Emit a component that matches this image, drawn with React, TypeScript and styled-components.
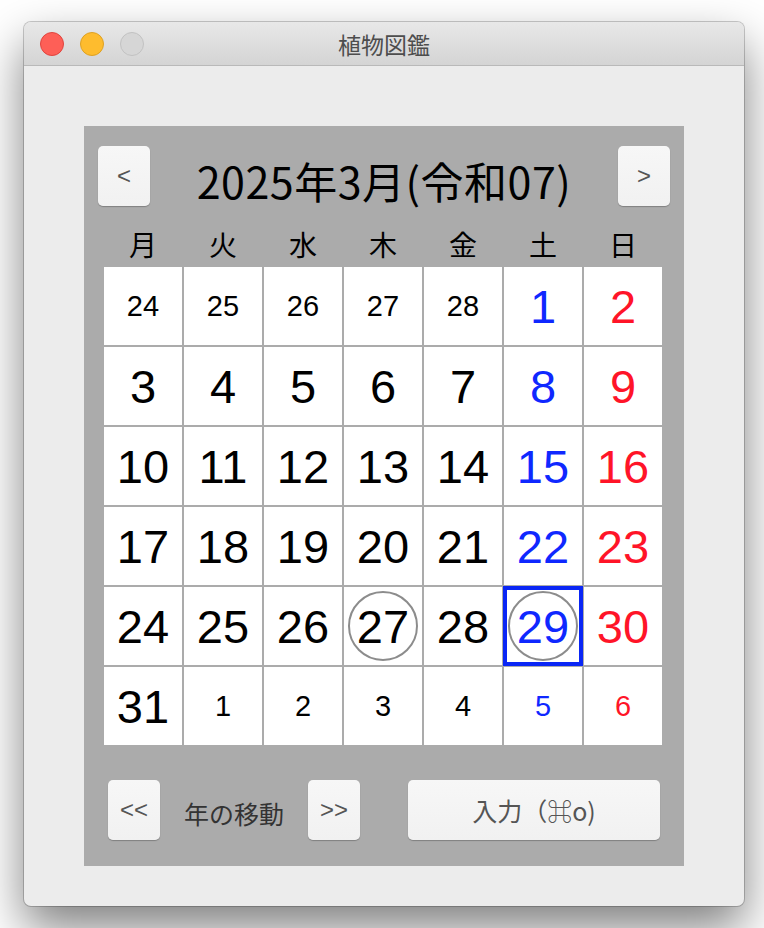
import styled, { createGlobalStyle } from "styled-components"

const GlobalStyle = createGlobalStyle`
  html, body {
    margin: 0;
    padding: 0;
    background: #ffffff;
  }
  body {
    font-family: "Liberation Sans", "Noto Sans CJK JP", sans-serif;
  }
`

const Page = styled.div`
  height: 928px;
  box-sizing: border-box;
  padding: 22px 20px 0 24px;
  overflow: hidden;
`

const Window = styled.div`
  width: 720px;
  height: 884px;
  background: #ececec;
  border-radius: 7px;
  box-shadow: 0 0 0 1px rgba(0, 0, 0, 0.2), 0 22px 48px rgba(0, 0, 0, 0.5);
  overflow: hidden;
  display: flex;
  flex-direction: column;
`

const TitleBar = styled.div`
  height: 43px;
  flex-shrink: 0;
  display: grid;
  grid-template-columns: 1fr auto 1fr;
  align-items: center;
  background: linear-gradient(#e8e8e8, #d4d4d4);
  border-bottom: 1px solid #b9b9b9;
`

const Lights = styled.div`
  display: flex;
  gap: 16px;
  padding-left: 16px;
`

const Light = styled.span<{ $fill: string; $edge: string }>`
  width: 24px;
  height: 24px;
  border-radius: 50%;
  background: ${p => p.$fill};
  border: 1px solid ${p => p.$edge};
  box-sizing: border-box;
`

const WindowTitle = styled.div`
  font-family: "Noto Sans CJK JP", sans-serif;
  font-size: 23px;
  color: #4d4d4d;
`

const Content = styled.div`
  padding: 60px 60px 40px 60px;
`

const Panel = styled.div`
  width: 600px;
  height: 740px;
  background: #ababab;
  box-sizing: border-box;
  padding-top: 20px;
  display: flex;
  flex-direction: column;
`

const Header = styled.div`
  display: flex;
  align-items: center;
  justify-content: space-between;
  padding: 0 14px;
  height: 60px;
`

const Button = styled.button<{ $width?: number }>`
  width: ${p => p.$width ?? 52}px;
  height: 60px;
  border: none;
  border-radius: 5px;
  background: linear-gradient(#f7f7f7, #f1f1f1);
  box-shadow: 0 1px 1px rgba(0, 0, 0, 0.25);
  color: #555555;
  font-family: "Liberation Sans", "Noto Sans CJK JP", sans-serif;
  font-size: 24px;
  padding: 0;
  display: flex;
  align-items: center;
  justify-content: center;
`

const MonthTitle = styled.div`
  font-family: "Noto Sans CJK JP", sans-serif;
  font-size: 43px;
  letter-spacing: 0.5px;
  color: #000;
  line-height: 1;
  padding-top: 8px;
`

const Weekdays = styled.div`
  display: grid;
  grid-template-columns: repeat(7, 78px);
  column-gap: 2px;
  margin: 20px 20px 0 20px;
  height: 40px;
  align-items: center;
`

const Weekday = styled.div`
  text-align: center;
  font-family: "Noto Sans CJK JP", sans-serif;
  font-size: 28px;
  line-height: 1;
  color: #000;
  padding-bottom: 4px;
`

const Grid = styled.div`
  display: grid;
  grid-template-columns: repeat(7, 78px);
  grid-auto-rows: 78px;
  gap: 2px;
  margin: 1px 20px 0 20px;
  width: 558px;
`

const Cell = styled.div<{ $small: boolean; $color: string; $selected: boolean }>`
  background: #ffffff;
  display: flex;
  align-items: center;
  justify-content: center;
  font-family: "Liberation Sans", sans-serif;
  font-size: ${p => (p.$small ? 29 : 47)}px;
  color: ${p => p.$color};
  outline: ${p => (p.$selected ? "4px solid #0a26f5" : "none")};
  outline-offset: -3px;
`

const Mark = styled.span<{ $ring: boolean }>`
  width: 70px;
  height: 70px;
  box-sizing: border-box;
  border-radius: 50%;
  border: ${p => (p.$ring ? "2px solid #8c8c8c" : "none")};
  display: flex;
  align-items: center;
  justify-content: center;
  line-height: 1;
`

const Footer = styled.div`
  display: flex;
  align-items: center;
  margin-top: 35px;
  padding-left: 24px;
`

const FooterLabel = styled.div`
  font-family: "Noto Sans CJK JP", sans-serif;
  font-size: 25px;
  color: #333333;
  width: 148px;
  text-align: center;
  padding-top: 6px;
`

const SubmitButton = styled(Button)`
  margin-left: 48px;
  font-family: "Noto Sans CJK JP", sans-serif;
  font-size: 25px;
`

const BLUE = "#0f28ff"
const RED = "#ff1428"

type Day = { n: number; small: boolean }

const buildDays = (): Day[] => {
  const days: Day[] = []
  for (let d = 24; d <= 28; d++) days.push({ n: d, small: true })
  for (let d = 1; d <= 31; d++) days.push({ n: d, small: false })
  for (let d = 1; d <= 6; d++) days.push({ n: d, small: true })
  return days
}

const weekdays = ["月", "火", "水", "木", "金", "土", "日"]

export default function App() {
  const days = buildDays()
  return (
    <>
      <GlobalStyle />
      <Page>
        <Window>
          <TitleBar>
            <Lights>
              <Light $fill="#fe5f57" $edge="#e0443e" />
              <Light $fill="#febc2e" $edge="#dea123" />
              <Light $fill="#d6d6d6" $edge="#c2c2c2" />
            </Lights>
            <WindowTitle>植物図鑑</WindowTitle>
            <div />
          </TitleBar>
          <Content>
            <Panel>
              <Header>
                <Button>&lt;</Button>
                <MonthTitle>2025年3月(令和07)</MonthTitle>
                <Button>&gt;</Button>
              </Header>
              <Weekdays>
                {weekdays.map(w => (
                  <Weekday key={w}>{w}</Weekday>
                ))}
              </Weekdays>
              <Grid>
                {days.map((d, i) => {
                  const col = i % 7
                  const color = col === 5 ? BLUE : col === 6 ? RED : "#000"
                  const current = !d.small
                  return (
                    <Cell
                      key={i}
                      $small={d.small}
                      $color={color}
                      $selected={current && d.n === 29}
                    >
                      <Mark $ring={current && (d.n === 27 || d.n === 29)}>{d.n}</Mark>
                    </Cell>
                  )
                })}
              </Grid>
              <Footer>
                <Button>&lt;&lt;</Button>
                <FooterLabel>年の移動</FooterLabel>
                <Button>&gt;&gt;</Button>
                <SubmitButton $width={252}>入力（⌘o)</SubmitButton>
              </Footer>
            </Panel>
          </Content>
        </Window>
      </Page>
    </>
  )
}
